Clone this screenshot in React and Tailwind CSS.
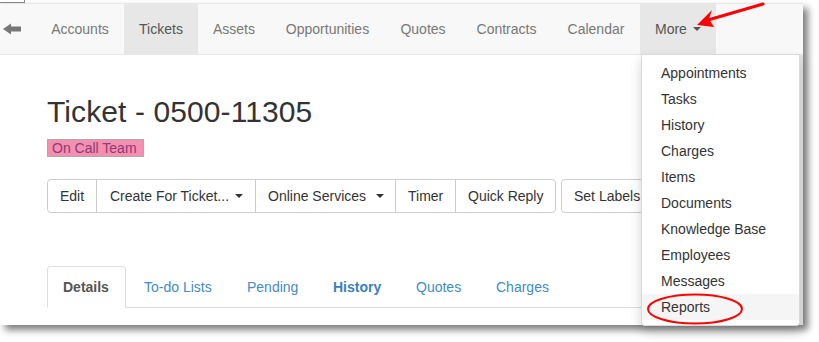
import React from "react";

const navItems = [
  ["Accounts", "w-[88px]"],
  ["Tickets", "w-[74px]"],
  ["Assets", "w-[72px]"],
  ["Opportunities", "w-[115px]"],
  ["Quotes", "w-[76px]"],
  ["Contracts", "w-[91px]"],
  ["Calendar", "w-[88px]"],
];
const menuItems = ["Appointments", "Tasks", "History", "Charges", "Items", "Documents", "Knowledge Base", "Employees", "Messages", "Reports"];
const tabs = [
  ["Details", "w-[79px]"],
  ["To-do Lists", "w-[101px]"],
  ["Pending", "w-[84px]"],
  ["History", "w-[81px]"],
  ["Quotes", "w-[78px]"],
  ["Charges", "w-[86px]"],
];

function Caret({ className = "" }) {
  return <span className={"inline-block w-0 h-0 align-middle border-x-[4px] border-x-transparent border-t-[4px] border-t-current " + className} />;
}

export default function App() {
  return (
    <div className="relative w-[819px] h-[342px] bg-white overflow-hidden font-['Liberation_Sans',Arial,sans-serif]">
      <div className="flex h-[3px]">
        <div className="w-[25px] h-[3px] border-r border-b border-[#8a8a8a]" />
      </div>
      <div className="relative w-[803px] h-[322px] bg-white shadow-[5px_5px_7px_rgba(0,0,0,0.5)]">
        {/* navbar */}
        <div className="flex h-[52px] bg-[#f8f8f8] border-y border-[#e7e7e7]">
          <div className="w-[36px] flex items-center pl-[3px]">
            <svg width="18" height="12" viewBox="0 0 18 12">
              <path d="M0 6 L8 0.5 L8 3.5 L18 3.5 L18 8.5 L8 8.5 L8 11.5 Z" fill="#777" />
            </svg>
          </div>
          {navItems.map(([n, w]) => (
            <div
              key={n}
              className={
                w +
                " text-center py-[15px] leading-[20px] text-[14px] " +
                (n === "Tickets" ? "bg-[#e7e7e7] text-[#555]" : "text-[#777]")
              }
            >
              {n}
            </div>
          ))}
          <div className="w-[76px] pl-[15px] py-[15px] leading-[20px] text-[14px] bg-[#e7e7e7] text-[#555] flex items-center">
            More <Caret className="ml-[6px]" />
          </div>
        </div>

        {/* content */}
        <div className="h-[270px] pl-[47px] border-r-[4px] border-[#e3e3e3]">
          <h1 className="pt-[40px] text-[30px] leading-[33px] text-[#333] tracking-[0.1px]">Ticket - 0500-11305</h1>
          <div className="mt-[11px] flex">
            <span className="border border-[#aaa] bg-[#f48fb1] text-[#8e3b70] text-[14px] leading-[16px] pl-[4px] pr-[6px]">On Call Team</span>
          </div>
          <div className="mt-[22px] flex text-[14px] text-[#333] leading-[20px]">
            <div className="flex">
              <div className="w-[50px] pl-[12px] py-[6px] border border-[#ccc] rounded-l-[4px]">Edit</div>
              <div className="w-[160px] pl-[13px] py-[6px] border border-[#ccc] -ml-px flex items-center">
                Create For Ticket...<Caret className="ml-[6px]" />
              </div>
              <div className="w-[141px] pl-[12px] py-[6px] border border-[#ccc] -ml-px flex items-center">
                Online Services<Caret className="ml-[10px]" />
              </div>
              <div className="w-[61px] pl-[12px] py-[6px] border border-[#ccc] -ml-px">Timer</div>
              <div className="w-[101px] pl-[12px] py-[6px] border border-[#ccc] -ml-px rounded-r-[4px]">Quick Reply</div>
            </div>
            <div className="ml-[5px] px-[12px] py-[6px] border border-[#ccc] rounded-[4px] flex items-center">
              Set Labels<Caret className="ml-[5px]" />
            </div>
          </div>
          <div className="mt-[53px] flex border-b border-[#ddd] text-[14px] leading-[20px]">
            {tabs.map(([t, w]) => (
              <div
                key={t}
                className={
                  w +
                  " mr-[2px] -mb-px pl-[15px] py-[10px] border rounded-t-[4px] whitespace-nowrap " +
                  (t === "Details"
                    ? "border-[#ddd] border-b-white bg-white text-[#555] font-bold"
                    : t === "History"
                    ? "border-transparent text-[#3a7fc1] font-bold"
                    : "border-transparent text-[#428bca]")
                }
              >
                {t}
              </div>
            ))}
          </div>
        </div>

        {/* dropdown */}
        <div className="absolute left-[641px] top-[51px] w-[159px] bg-white py-[5px] border border-[rgba(0,0,0,0.15)] rounded-b-[4px] shadow-[0_6px_12px_rgba(0,0,0,0.175)] text-[14px] leading-[20px] text-[#333]">
          {menuItems.map((m) => (
            <div key={m} className={"px-[19px] py-[3px] " + (m === "Reports" ? "bg-[#f5f5f5]" : "")}>
              {m}
            </div>
          ))}
        </div>
      </div>

      {/* annotations */}
      <svg className="absolute inset-0 pointer-events-none" width="819" height="342">
        <line x1="763" y1="4" x2="708" y2="20" stroke="#ff0000" strokeWidth="3" strokeLinecap="round" />
        <polygon points="697,25 712,10 709,19 714,27" fill="#ff0000" />
        <ellipse cx="695" cy="309" rx="47" ry="14.5" fill="none" stroke="#ff0000" strokeWidth="2" />
      </svg>
    </div>
  );
}
